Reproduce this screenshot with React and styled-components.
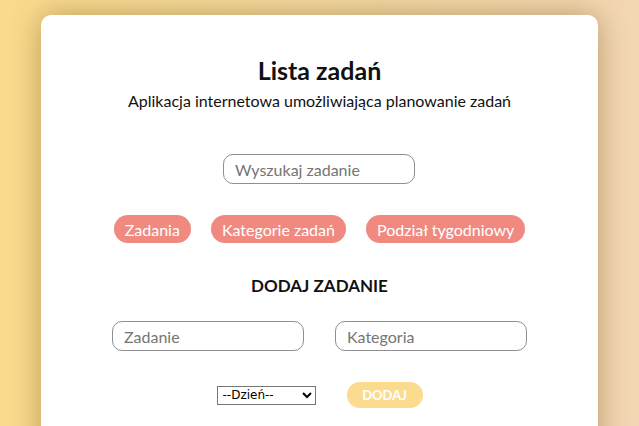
import React from 'react';
import styled, { createGlobalStyle } from 'styled-components';

const GlobalStyle = createGlobalStyle`
  html, body {
    margin: 0;
    padding: 0;
  }
  body {
    min-height: 100vh;
    background: linear-gradient(90deg, #fadb8c 0%, #f4d9a6 60%, #f3d7b4 100%);
    font-family: 'Lato', 'Noto Sans', sans-serif;
    color: #111;
    overflow: hidden;
  }
`;

const Page = styled.div`
  padding-top: 15px;
  display: flex;
  justify-content: center;
`;

const Card = styled.main`
  width: 557px;
  min-height: 460px;
  background: #fff;
  border-radius: 10px;
  box-shadow: 0 0 30px rgba(110, 80, 20, 0.45);
  display: flex;
  flex-direction: column;
  align-items: center;
  padding-top: 40px;
  box-sizing: border-box;
`;

const Title = styled.h1`
  margin: 0;
  font-size: 25px;
  font-weight: 700;
  line-height: 30px;
`;

const Subtitle = styled.p`
  margin: 6px 0 0;
  font-size: 16px;
  line-height: 20px;
`;

const Field = styled.input`
  box-sizing: border-box;
  width: 192px;
  height: 30px;
  border: 1px solid #8f8f8f;
  border-radius: 10px;
  padding: 0 11px;
  font-family: 'Lato', sans-serif;
  font-size: 16px;
  color: #333;
  outline: none;
  &::placeholder {
    color: #757575;
  }
`;

const SearchField = styled(Field)`
  margin-top: 43px;
  margin-left: -1px;
`;

const Nav = styled.nav`
  display: flex;
  gap: 20px;
  margin-top: 31px;
`;

const Pill = styled.button`
  height: 28px;
  padding: 0 11px;
  border: none;
  border-radius: 14px;
  background: #f08a80;
  color: #fff;
  font-family: 'Lato', sans-serif;
  font-size: 16px;
  cursor: pointer;
`;

const SectionTitle = styled.h2`
  margin: 33px 0 0;
  font-size: 17px;
  font-weight: 700;
  line-height: 20px;
`;

const FieldRow = styled.div`
  display: flex;
  gap: 31px;
  margin-top: 25px;
`;

const ActionRow = styled.div`
  display: flex;
  align-items: center;
  gap: 31px;
  margin-top: 31px;
`;

const DaySelect = styled.select`
  width: 99px;
  height: 19px;
  font-family: 'DejaVu Sans', sans-serif;
  font-size: 12px;
  border: 1px solid #767676;
  border-radius: 0;
  background: #fff;
  color: #000;
  padding: 0 0 0 1px;
`;

const AddButton = styled.button`
  width: 76px;
  height: 26px;
  border: none;
  border-radius: 13px;
  background: #fbdb8d;
  color: #fff;
  font-family: 'Lato', sans-serif;
  font-weight: 700;
  font-size: 13px;
  cursor: pointer;
`;

const days = ['Poniedziałek', 'Wtorek', 'Środa', 'Czwartek', 'Piątek', 'Sobota', 'Niedziela'];

export default function App() {
  return (
    <>
      <GlobalStyle />
      <Page>
        <Card>
          <Title>Lista zadań</Title>
          <Subtitle>Aplikacja internetowa umożliwiająca planowanie zadań</Subtitle>
          <SearchField placeholder="Wyszukaj zadanie" />
          <Nav>
            <Pill>Zadania</Pill>
            <Pill>Kategorie zadań</Pill>
            <Pill>Podział tygodniowy</Pill>
          </Nav>
          <SectionTitle>DODAJ ZADANIE</SectionTitle>
          <FieldRow>
            <Field placeholder="Zadanie" />
            <Field placeholder="Kategoria" />
          </FieldRow>
          <ActionRow>
            <DaySelect defaultValue="">
              <option value="">--Dzień--</option>
              {days.map((d) => (
                <option key={d} value={d}>{d}</option>
              ))}
            </DaySelect>
            <AddButton>DODAJ</AddButton>
          </ActionRow>
        </Card>
      </Page>
    </>
  );
}
